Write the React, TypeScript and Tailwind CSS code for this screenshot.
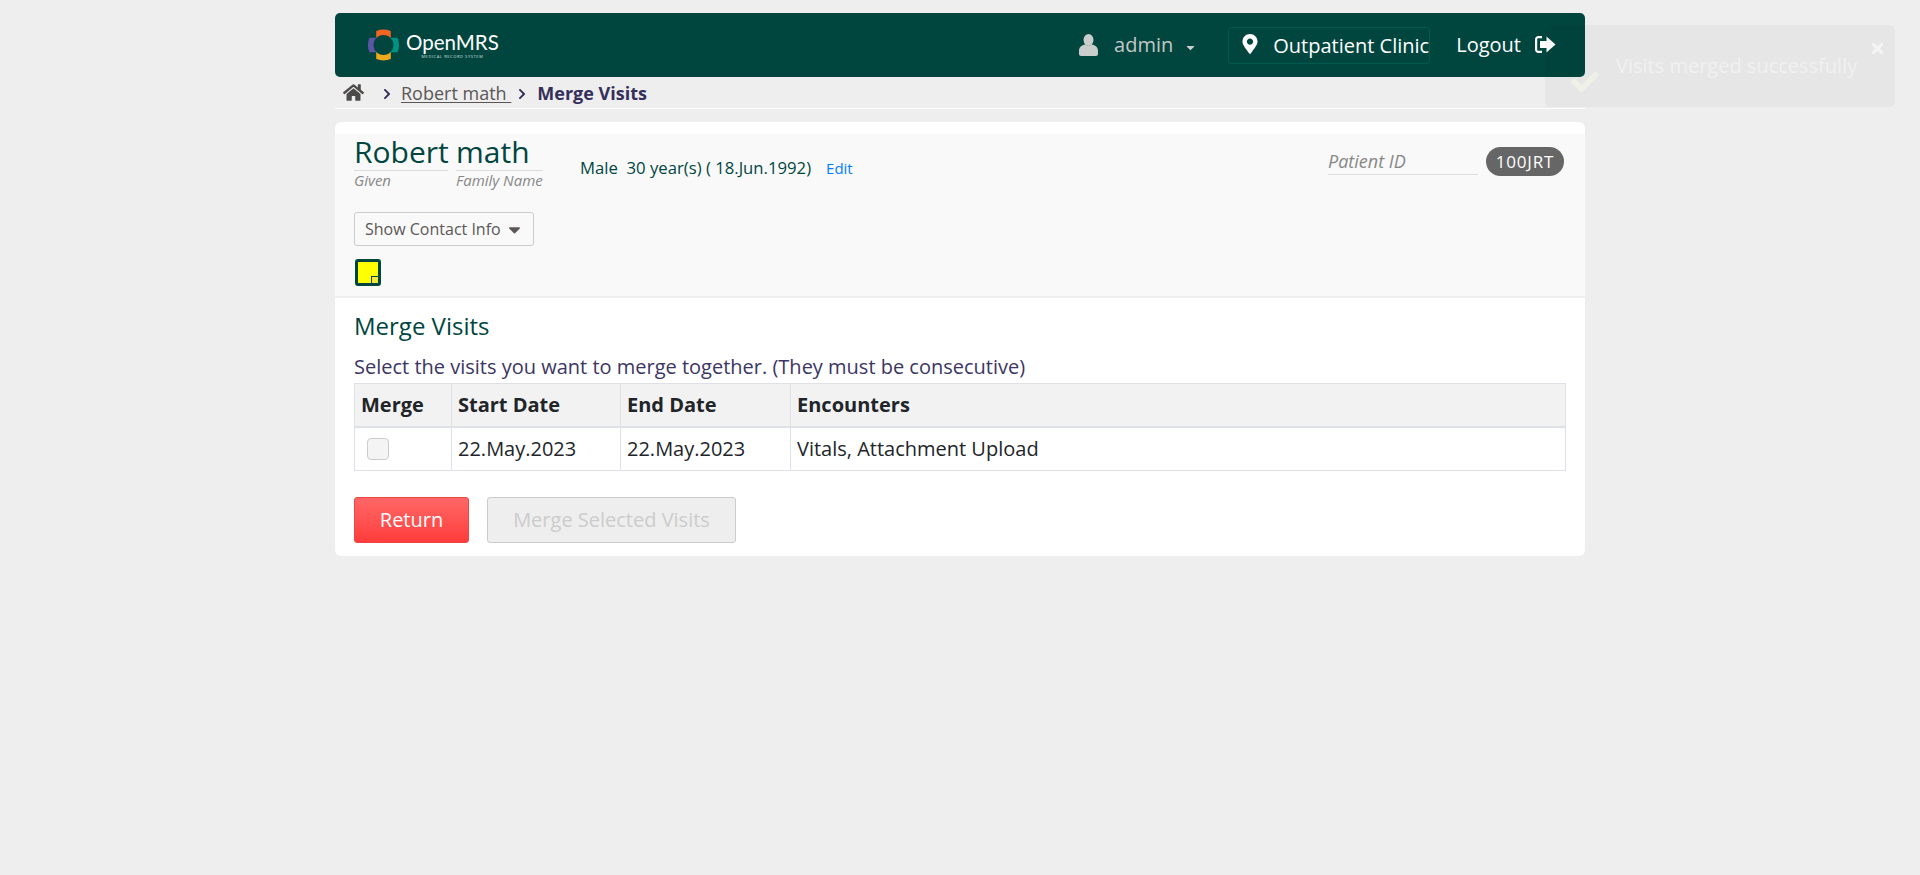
import React from "react";
import { FaHome, FaChevronRight, FaMapMarkerAlt, FaCheck, FaTimes, FaCaretDown } from "react-icons/fa";

function Logo() {
  const petal = "M9.5 2.500 Q17 -0.500 24.500 2.500 L24.500 10 A10.200 10.200 0 0 0 9.500 10 Z";
  return (
    <div className="flex items-center">
      <svg width="33" height="34" viewBox="0 0 34 34" className="shrink-0">
        <path d={petal} fill="#f26522" />
        <path d={petal} fill="#009384" transform="rotate(90 17 17)" />
        <path d={petal} fill="#f0a81c" transform="rotate(180 17 17)" />
        <path d={petal} fill="#5b57a6" transform="rotate(270 17 17)" />
      </svg>
      <div className="ml-[6px] flex flex-col items-center leading-none text-white">
        <span className="font-['Lato','Open_Sans',sans-serif] text-[20.5px] leading-[22px]">OpenMRS</span>
        <span className="mt-[2px] font-['Open_Sans',sans-serif] text-[4px] leading-[4px] tracking-[0.6px] opacity-80">MEDICAL RECORD SYSTEM</span>
      </div>
    </div>
  );
}

function UserIcon() {
  return (
    <svg width="19" height="22" viewBox="0 0 19 22" fill="#c9cdcc">
      <ellipse cx="9.500" cy="6" rx="5" ry="6" />
      <path d="M0 17c0-4 3-6 6-6.500 1 1.500 6 1.500 7 0 3 .5 6 2.500 6 6.500v3c0 1-1 2-2 2H2c-1 0-2-1-2-2z" />
    </svg>
  );
}

function LogoutIcon() {
  return (
    <svg width="22" height="19" viewBox="0 0 22 19" fill="#fff">
      <path d="M8 1H4.500C2.500 1 1 2.500 1 4.500v10C1 16.500 2.500 18 4.500 18H8v-2.200H4.500c-.8 0-1.300-.5-1.300-1.300v-10c0-.8.5-1.300 1.300-1.300H8z" />
      <path d="M12.500 1.500 21.500 9.500 12.500 17.500V13H6V6h6.500z" />
    </svg>
  );
}

export default function App() {
  return (
    <div className="relative min-h-[875px] bg-[#eeeeee] pt-[13px] font-['Open_Sans',sans-serif] text-[18px]">
      <div className="mx-auto w-[1250px]">
        <header className="flex h-[64px] items-center rounded-[5px] bg-[#00463f] pl-[32px] pr-[29px] text-white">
          <Logo />
          <div className="ml-auto flex items-center text-[20px]">
            <UserIcon />
            <span className="ml-[16px] text-[#c2c8c6]">admin</span>
            <FaCaretDown className="ml-[11px] mt-[4px] text-[13px] text-[#c9cdcc]" />
            <div className="ml-[31px] flex h-[37px] w-[202px] items-center overflow-hidden whitespace-nowrap rounded-[3px] border border-[#005a50] pl-[11px]">
              <FaMapMarkerAlt className="mr-[13px] shrink-0 -translate-y-[1px] text-[20px]" />
              <span className="translate-y-[1px]">Outpatient Clinic</span>
            </div>
            <span className="ml-[26px] -mt-[1px]">Logout</span>
            <span className="ml-[13px] -mt-[2px]"><LogoutIcon /></span>
          </div>
        </header>

        <nav className="flex h-[32px] items-center border-b border-white pt-[1px] text-[#352f5c]">
          <FaHome className="ml-[8px] -mt-[1px] text-[21px] text-[#4d4a4a]" />
          <FaChevronRight className="ml-[17px] mt-[2px] text-[12px]" />
          <span className="ml-[8px] whitespace-pre text-[#5b5757] underline underline-offset-2">Robert math </span>
          <FaChevronRight className="ml-[5px] mt-[2px] text-[12px]" />
          <span className="ml-[9px] font-bold">Merge Visits</span>
        </nav>

        <main className="mt-[13px] h-[434px] rounded-[6px] bg-white pt-[12px]">
          <section className="flex h-[164px] justify-between border-b-2 border-[#f0f0f0] bg-[#f9f9f9] pl-[19px] pr-[21px]">
            <div>
              <div className="flex items-start">
                <div className="flex">
                  <div className="mr-[8px] w-[94px]">
                    <div className="whitespace-nowrap border-b border-[#dddddd] text-[30px] leading-[36px] text-[#00463f]">Robert</div>
                    <div className="-mt-[1px] text-[15px] italic leading-[20px] text-[#888888]">Given</div>
                  </div>
                  <div className="w-[87px]">
                    <div className="whitespace-nowrap border-b border-[#dddddd] text-[30px] leading-[36px] text-[#00463f]">math</div>
                    <div className="-mt-[1px] whitespace-nowrap text-[15px] italic leading-[20px] text-[#888888]">Family Name</div>
                  </div>
                </div>
                <div className="ml-[37px] mt-[22px] flex items-center whitespace-pre text-[16.7px] leading-[24px] text-[#00463f]">
                  <span>Male  30 year(s) ( 18.Jun.1992)</span>
                  <span className="ml-[15px] text-[15px] text-[#007fff]">Edit</span>
                </div>
              </div>
              <button className="mt-[22px] flex h-[34px] w-[180px] items-center rounded-[3px] border border-[#cccccc] pl-[10px] text-[16px] text-[#5b5757]">
                Show Contact Info
                <FaCaretDown className="ml-[4px] text-[19px]" />
              </button>
              <div className="relative ml-[1px] mt-[13px] h-[27px] w-[26px] rounded-[3px] border-[3px] border-[#00463f] bg-[#ffff00]">
                <span className="absolute bottom-0 right-0 h-[7px] w-[7px] border-l border-t border-[#00463f] bg-[#f5e83a]" />
              </div>
            </div>
            <div className="mt-[13px] flex items-start">
              <div className="h-[28px] w-[150px] border-b border-[#dddddd] text-[18px] italic leading-[28px] text-[#888888]">Patient ID</div>
              <div className="ml-[8px] flex h-[29px] w-[78px] items-center justify-center rounded-[15px] bg-[#666666] text-[17px] tracking-[0.8px] text-white">100JRT</div>
            </div>
          </section>

          <section className="px-[19px]">
            <h2 className="mt-[10px] text-[24px] leading-[36px] text-[#00463f]">Merge Visits</h2>
            <p className="mb-[1px] mt-[8px] text-[20px] leading-[30px] text-[#3b3663]">Select the visits you want to merge together. (They must be consecutive)</p>
            <table className="w-[1212px] table-fixed border-collapse text-[20px] text-[#212529]">
              <thead>
                <tr className="h-[43px] bg-[#f2f2f2]">
                  <th className="w-[97px] border border-b-2 border-[#dee2e6] px-[6px] text-left font-bold">Merge</th>
                  <th className="w-[169px] border border-b-2 border-[#dee2e6] px-[6px] text-left font-bold">Start Date</th>
                  <th className="w-[170px] border border-b-2 border-[#dee2e6] px-[6px] text-left font-bold">End Date</th>
                  <th className="border border-b-2 border-[#dee2e6] px-[6px] text-left font-bold">Encounters</th>
                </tr>
              </thead>
              <tbody>
                <tr className="h-[44px]">
                  <td className="border border-[#dee2e6] px-[6px]">
                    <input type="checkbox" className="ml-[6px] block h-[22px] w-[22px] appearance-none rounded-[4px] border border-[#cccccc] bg-[#f4f4f4]" />
                  </td>
                  <td className="border border-[#dee2e6] px-[6px]">22.May.2023</td>
                  <td className="border border-[#dee2e6] px-[6px]">22.May.2023</td>
                  <td className="border border-[#dee2e6] px-[6px]">Vitals, Attachment Upload</td>
                </tr>
              </tbody>
            </table>
            <div className="mt-[26px] flex">
              <button className="h-[46px] w-[115px] rounded-[3px] border border-[#ee4444] bg-gradient-to-b from-[#ff6666] to-[#ff3b3b] text-[20px] text-white">Return</button>
              <button className="ml-[18px] h-[46px] w-[249px] rounded-[3px] border border-[#cccccc] bg-[#eeeeee] text-[20px] text-[#cccccc]">Merge Selected Visits</button>
            </div>
          </section>
        </main>
      </div>

      <div className="absolute left-[1545px] top-[25px] h-[82px] w-[350px] rounded-[5px] bg-[#00000008] text-[20px] text-[#f1f1f1]">
        <FaCheck className="absolute left-[26px] top-[43px] text-[28px] text-[#eff0e8]" />
        <span className="absolute left-[71px] top-[27px] whitespace-nowrap leading-[27px]">Visits merged successfully</span>
        <FaTimes className="absolute right-[9px] top-[15px] text-[17px] text-[#f4f4f4]" />
      </div>
    </div>
  );
}
